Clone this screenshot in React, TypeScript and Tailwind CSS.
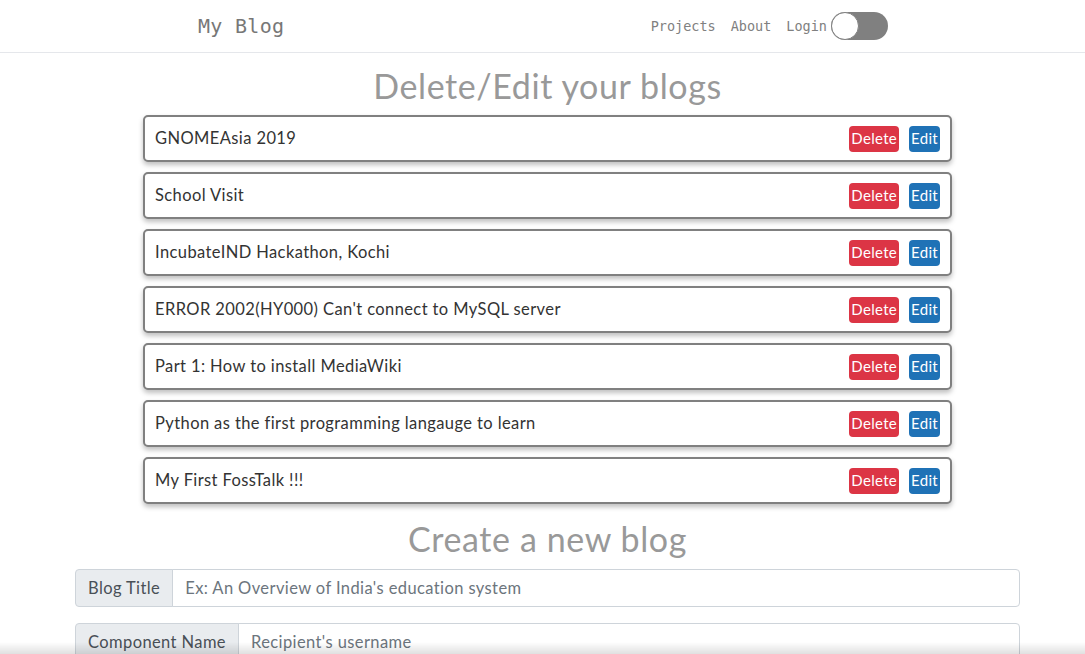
import React from "react"

const blogs = [
  "GNOMEAsia 2019",
  "School Visit",
  "IncubateIND Hackathon, Kochi",
  "ERROR 2002(HY000) Can't connect to MySQL server",
  "Part 1: How to install MediaWiki",
  "Python as the first programming langauge to learn",
  "My First FossTalk !!!",
]

const body = "font-['Lato','Open_Sans',sans-serif]"
const mono = "font-['DejaVu_Sans_Mono','Liberation_Mono',monospace]"

function Navbar() {
  return (
    <nav className="h-[53px] border-b border-[#e5e7eb] flex items-center bg-white">
      <div className="flex items-center w-full pl-[198px] pr-[197px]">
        <a className={`${mono} text-[20px] text-[#777] tracking-[0.3px]`}>My Blog</a>
        <div className={`${mono} ml-auto flex items-center text-[13.5px] text-[#808080]`}>
          <a className="mr-[15px]">Projects</a>
          <a className="mr-[15px]">About</a>
          <a>Login</a>
          {/* toggle switch */}
          <div className="ml-[4px] w-[57px] h-[28px] rounded-full bg-[#808080] relative">
            <div className="absolute left-0 top-0 w-[28px] h-[28px] rounded-full bg-white border border-[#808080]" />
          </div>
        </div>
      </div>
    </nav>
  )
}

function BlogRow({ title }: { title: string }) {
  return (
    <div className="h-[47px] mb-[10px] flex items-center px-[10px] border-2 border-[#808080] rounded-[5px] bg-white shadow-[0_3px_5px_rgba(0,0,0,0.25)]">
      <span className="text-[16.5px] text-[#333] tracking-[0.4px]">{title}</span>
      <div className="ml-auto flex items-center gap-[10px]">
        <button className="h-[26px] px-[2px] rounded-[4px] bg-[#dc3545] text-white text-[15px] tracking-[0.3px]">Delete</button>
        <button className="h-[26px] px-[2px] rounded-[4px] bg-[#1f72b6] text-white text-[15px] tracking-[0.3px]">Edit</button>
      </div>
    </div>
  )
}

function InputRow({ label, placeholder }: { label: string; placeholder: string }) {
  return (
    <div className="flex h-[38px] mb-[16px]">
      <span className="flex items-center px-[12px] bg-[#e9ecef] border border-[#ced4da] rounded-l-[4px] text-[16.5px] text-[#495057] tracking-[0.4px]">
        {label}
      </span>
      <input
        className="flex-1 -ml-px px-[12px] border border-[#ced4da] rounded-r-[4px] text-[16.5px] tracking-[0.4px] text-[#495057] placeholder:text-[#6c757d] outline-none"
        placeholder={placeholder}
      />
    </div>
  )
}

export default function App() {
  return (
    <div className={`${body} bg-white min-h-screen relative`}>
      <Navbar />
      <div className="ml-[75px] w-[945px]">
        <h1 className="text-center text-[34px] text-[#999] tracking-[0.6px] leading-none mt-[16px] mb-[12px]">Delete/Edit your blogs</h1>
        <div className="w-[809px] mx-auto">
          {blogs.map((b) => (
            <BlogRow key={b} title={b} />
          ))}
        </div>
        <h1 className="text-center text-[34px] text-[#999] tracking-[0.6px] leading-none mt-[18px] mb-[13px]">Create a new blog</h1>
        <InputRow label="Blog Title" placeholder="Ex: An Overview of India's education system" />
        <InputRow label="Component Name" placeholder="Recipient's username" />
        <InputRow label="Author" placeholder="Author name" />
      </div>
      {/* bottom shade */}
      <div className="fixed left-0 right-0 bottom-0 h-[12px] bg-gradient-to-b from-transparent to-[rgba(0,0,0,0.12)] pointer-events-none" />
    </div>
  )
}
